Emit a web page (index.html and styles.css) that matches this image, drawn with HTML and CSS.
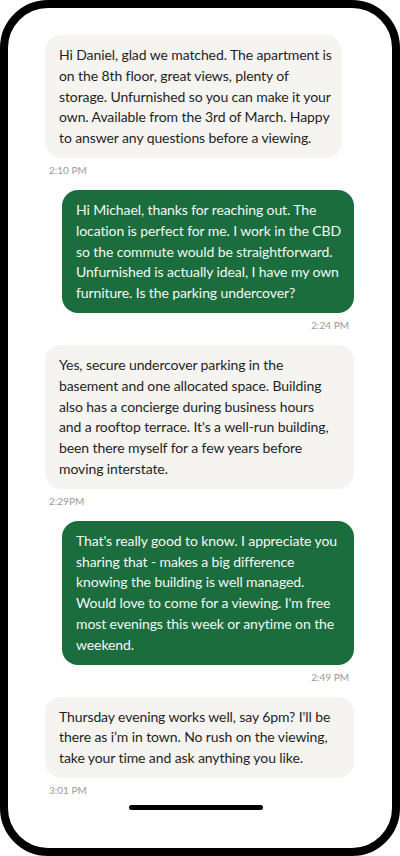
FILE: index.html
```html
<!DOCTYPE html>
<html lang="en">
<head>
    <meta charset="UTF-8">
    <meta name="viewport" content="width=device-width, initial-scale=1.0">
    <title>Chat</title>
    <link rel="stylesheet" href="styles.css">
</head>
<body>
    <!-- Phone Frame -->
    <div class="phone">
        <div class="chat">
            <div class="message incoming narrow">
                <div class="bubble">Hi Daniel, glad we matched. The apartment is<br>on the 8th floor, great views, plenty of<br>storage. Unfurnished so you can make it your<br>own. Available from the 3rd of March. Happy<br>to answer any questions before a viewing.</div>
                <div class="time">2:10 PM</div>
            </div>

            <div class="message outgoing">
                <div class="bubble">Hi Michael, thanks for reaching out. The<br>location is perfect for me. I work in the CBD<br>so the commute would be straightforward.<br>Unfurnished is actually ideal, I have my own<br>furniture. Is the parking undercover?</div>
                <div class="time">2:24 PM</div>
            </div>

            <div class="message incoming">
                <div class="bubble">Yes, secure undercover parking in the<br>basement and one allocated space. Building<br>also has a concierge during business hours<br>and a rooftop terrace. It's a well-run building,<br>been there myself for a few years before<br>moving interstate.</div>
                <div class="time">2:29PM</div>
            </div>

            <div class="message outgoing">
                <div class="bubble">That's really good to know. I appreciate you<br>sharing that - makes a big difference<br>knowing the building is well managed.<br>Would love to come for a viewing. I'm free<br>most evenings this week or anytime on the<br>weekend.</div>
                <div class="time">2:49 PM</div>
            </div>

            <div class="message incoming">
                <div class="bubble">Thursday evening works well, say 6pm? I'll be<br>there as i’m in town. No rush on the viewing,<br>take your time and ask anything you like.</div>
                <div class="time">3:01 PM</div>
            </div>
        </div>

        <!-- Home Indicator -->
        <div class="home-bar"></div>
    </div>
</body>
</html>
```

FILE: styles.css
```css
/* General Styles */
body {
    margin: 0;
    font-family: Lato, "Noto Sans", sans-serif;
    background-color: #fff;
}

/* Phone Frame */
.phone {
    box-sizing: border-box;
    width: 400px;
    height: 856px;
    border: 8px solid #000;
    border-radius: 48px;
    background: #fff;
    padding: 27px 38px 0 37px;
    display: flex;
    flex-direction: column;
}

/* Chat Thread */
.chat {
    display: flex;
    flex-direction: column;
}

.message {
    display: flex;
    flex-direction: column;
    margin-bottom: 14px;
}

.bubble {
    box-sizing: border-box;
    padding: 10px 14px 9px;
    border-radius: 16px;
    font-size: 14px;
    line-height: 20.8px;
    letter-spacing: -0.1px;
    white-space: nowrap;
}

.time {
    margin-top: 6px;
    font-size: 10px;
    line-height: 12px;
    color: #9a9a9a;
}

/* Incoming (left) */
.incoming {
    align-items: flex-start;
}

.incoming .bubble {
    width: 309px;
    background: #f5f4f0;
    color: #1f1f1f;
}

.incoming.narrow .bubble {
    width: 297px;
}

.incoming .time {
    padding-left: 4px;
}

/* Outgoing (right) */
.outgoing {
    align-items: flex-end;
}

.outgoing .bubble {
    width: 292px;
    background: #1b6d3e;
    color: #f3f7f4;
}

.outgoing .time {
    padding-right: 5px;
}

/* Home Indicator */
.home-bar {
    align-self: center;
    width: 134px;
    height: 5px;
    margin-top: -5px;
    margin-right: 8px;
    border-radius: 3px;
    background: #000;
}
```
